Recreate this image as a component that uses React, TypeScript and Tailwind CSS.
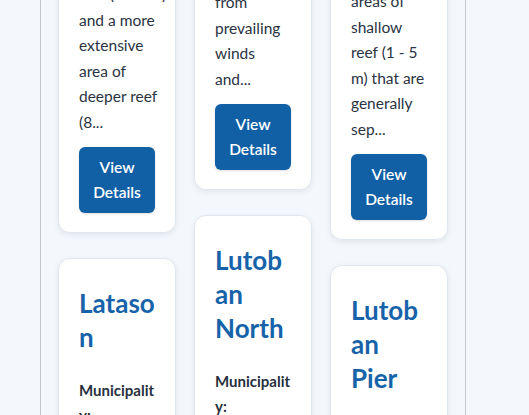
import React from "react";

type Site = {
  name?: string[];
  lines?: string[];
  municipality?: string;
};

const columns: { offset: string; sites: Site[] }[] = [
  {
    offset: "-mt-[43px]",
    sites: [
      {
        lines: ["reef (1 - 3 m)", "and a more", "extensive", "area of", "deeper reef", "(8..."],
      },
      { name: ["Lataso", "n"], municipality: "Lingayen" },
    ],
  },
  {
    offset: "-mt-[35px]",
    sites: [
      { lines: ["from", "prevailing", "winds", "and..."] },
      { name: ["Lutob", "an", "North"], municipality: "Lingayen" },
    ],
  },
  {
    offset: "-mt-[36px]",
    sites: [
      {
        lines: ["areas of", "shallow", "reef (1 - 5", "m) that are", "generally", "sep..."],
      },
      { name: ["Lutob", "an", "Pier"], municipality: "Lingayen" },
    ],
  },
];

const SiteCard = ({ site }: { site: Site }) => {
  return (
    <div
      className={`rounded-xl border border-[#e1e7ef] bg-white px-5 pb-[19px] shadow-[0_2px_6px_rgba(15,23,42,0.08)] ${
        site.name ? "pt-[27px]" : "pt-6"
      }`}
    >
      {site.name && (
        <h3 className="mb-[24px] text-[26px] leading-[34px] font-bold text-[#1763a9]">
          {site.name.map((part, i) => (
            <span key={i} className="block">
              {part}
            </span>
          ))}
        </h3>
      )}
      {site.municipality && (
        <p className="text-[15px] leading-[25px] font-bold text-[#27303d] break-words">
          Municipality:
          <span className="block font-normal">{site.municipality}</span>
        </p>
      )}
      {site.lines && (
        <>
          <p className="text-[15.5px] leading-[25.5px] text-[#2a3343]">
            {site.lines.map((line, i) => (
              <span key={i} className="block whitespace-nowrap">
                {line}
              </span>
            ))}
          </p>
          <button className="mt-3 w-full rounded-md bg-[#1160a6] py-2 text-[15.5px] leading-[25px] font-semibold text-white shadow-sm">
            View
            <br />
            Details
          </button>
        </>
      )}
    </div>
  );
};

const App = () => {
  return (
    <div className="min-h-screen h-[415px] overflow-hidden bg-[#f4f7fb] font-['Lato',sans-serif]">
      <div className="ml-[40px] h-full w-[426px] overflow-hidden border-x border-[#c3c7cc] bg-[#f4f7fb]">
        <div className="grid grid-cols-3 items-start gap-x-[18px] px-[17px]">
          {columns.map((col, ci) => (
            <div key={ci} className={`flex flex-col gap-[25px] ${col.offset}`}>
              {col.sites.map((site, si) => (
                <SiteCard key={si} site={site} />
              ))}
            </div>
          ))}
        </div>
      </div>
    </div>
  );
};

export default App;
